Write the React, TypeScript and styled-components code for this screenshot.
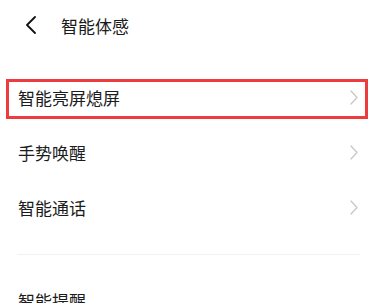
import React from "react";
import styled, { createGlobalStyle } from "styled-components";

const Global = createGlobalStyle`
  html, body { margin: 0; padding: 0; background: #ffffff; }
  body { font-family: "Noto Sans CJK SC", "Noto Sans", sans-serif; color: #1c1c1c; }
`;

const Page = styled.div`
  width: 376px;
  height: 303px;
  overflow: hidden;
  background: #ffffff;
`;

const Header = styled.header`
  height: 50px;
  display: flex;
  align-items: center;
  padding-left: 25px;
  gap: 25px;
`;

const BackButton = styled.button`
  border: 0;
  background: none;
  padding: 0;
  width: 11px;
  height: 18px;
  display: flex;
  color: #111;
`;

const Title = styled.h1`
  margin: 0;
  font-size: 17px;
  font-weight: 400;
  line-height: 1;
  color: #1a1a1a;
`;

const List = styled.div`
  padding-top: 20px;
  display: flex;
  flex-direction: column;
`;

const Row = styled.div<{ $highlight?: boolean }>`
  position: relative;
  height: 55px;
  display: flex;
  align-items: center;
  justify-content: space-between;
  padding: 0 18px;
  font-size: 17px;
  color: #1c1c1c;
  &::after {
    content: "";
    display: ${(p) => (p.$highlight ? "block" : "none")};
    position: absolute;
    top: 9px;
    bottom: 6px;
    left: 6px;
    right: 8px;
    border: 3px solid #ee3b3d;
    pointer-events: none;
  }
`;

const Label = styled.span`
  line-height: 1;
`;

const Chevron = styled.svg`
  width: 8px;
  height: 15px;
  color: #c8c8c8;
  flex: none;
`;

const Divider = styled.div`
  height: 1px;
  background: #f1f1f1;
  margin: 19px 16px 18px 17px;
`;

const ChevronRight = () => (
  <Chevron viewBox="0 0 8 15" fill="none">
    <path d="M1 1 L7 7.5 L1 14" stroke="currentColor" strokeWidth="1.3" strokeLinecap="round" strokeLinejoin="round" />
  </Chevron>
);

const items = ["智能亮屏熄屏", "手势唤醒", "智能通话"];

export default function App() {
  return (
    <Page>
      <Global />
      <Header>
        <BackButton aria-label="返回">
          <svg width="11" height="18" viewBox="0 0 11 18" fill="none">
            <path d="M10 1 L2 9 L10 17" stroke="currentColor" strokeWidth="1.8" strokeLinecap="round" strokeLinejoin="round" />
          </svg>
        </BackButton>
        <Title>智能体感</Title>
      </Header>
      <List>
        {items.map((t, i) => (
          <Row key={t} $highlight={i === 0}>
            <Label>{t}</Label>
            <ChevronRight />
          </Row>
        ))}
        <Divider />
        <Row>
          <Label>智能提醒</Label>
        </Row>
      </List>
    </Page>
  );
}
